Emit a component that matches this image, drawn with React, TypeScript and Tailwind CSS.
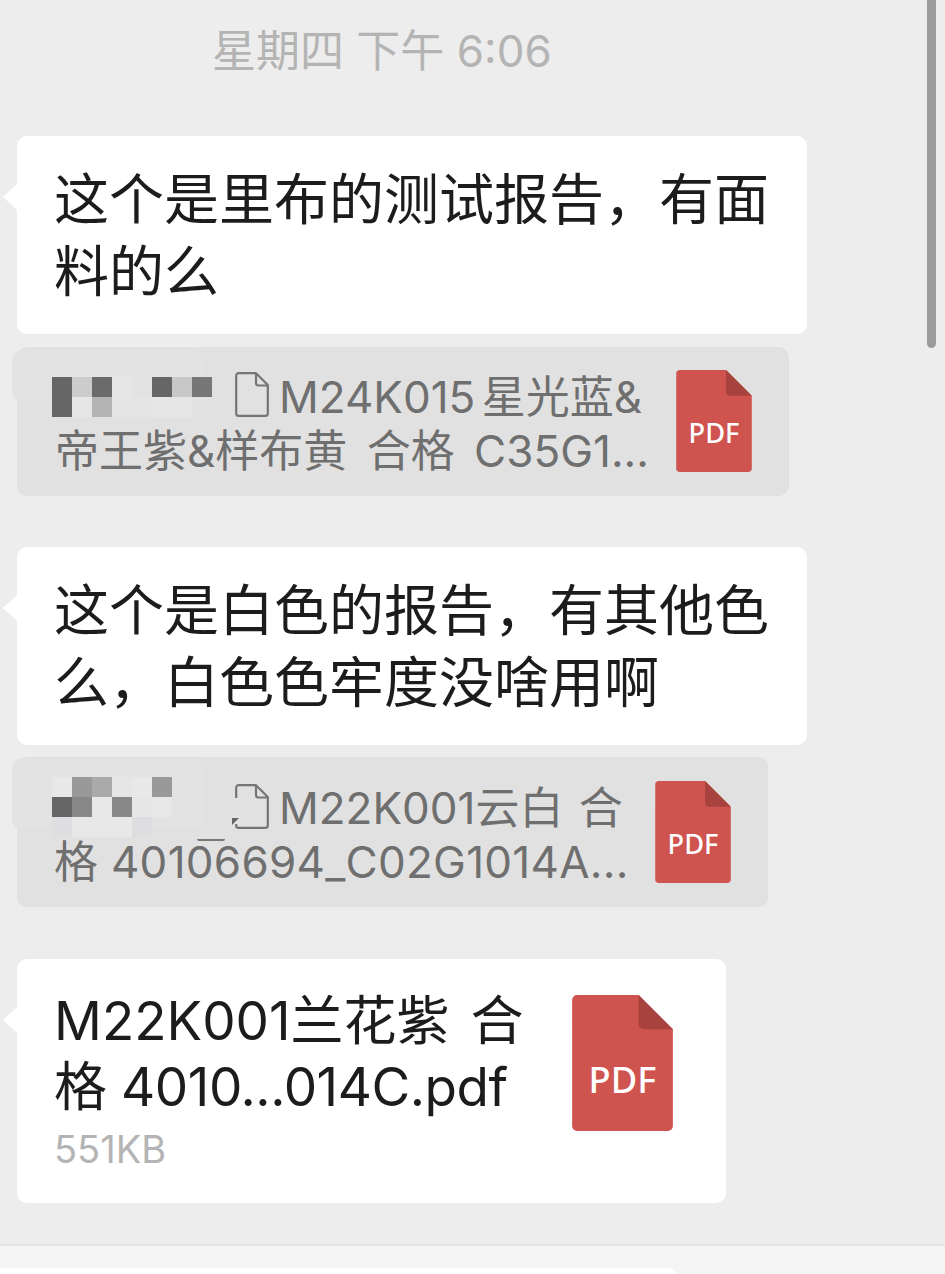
const fontStack = "font-['Inter','Noto_Sans_CJK_SC',sans-serif]";

const PdfIcon = ({ className }: { className: string }) => (
  <svg viewBox="0 0 100 135" className={className}>
    <path
      d="M5 0H66L100 34V130a5 5 0 0 1-5 5H5a5 5 0 0 1-5-5V5a5 5 0 0 1 5-5Z"
      fill="#cf534f"
    />
    <path d="M66 0L100 34H71a5 5 0 0 1-5-5Z" fill="#a8423e" />
    <text
      x="50"
      y="97"
      textAnchor="middle"
      fontSize="36"
      fontWeight="500"
      fill="#fff"
      fontFamily="'Noto Sans', sans-serif"
    >
      PDF
    </text>
  </svg>
);

const DocIcon = () => (
  <svg viewBox="0 0 34 45" className="w-[34px] h-[45px] shrink-0" fill="none" stroke="#757575" strokeWidth="2.2" strokeLinejoin="round">
    <path d="M3 1.2H21L32.8 13V41.5a2.3 2.3 0 0 1-2.3 2.3H3.5a2.3 2.3 0 0 1-2.3-2.3V3.5a2.3 2.3 0 0 1 1.8-2.3Z" />
    <path d="M21 1.2V11a2.5 2.5 0 0 0 2.5 2.5H32.8" />
  </svg>
);

const Bubble = ({ className, children }: { className: string; children: React.ReactNode }) => (
  <div className={`relative bg-white rounded-[10px] ${className}`}>
    <div className="absolute -left-[14px] top-[48px] w-0 h-0 border-y-[13px] border-y-transparent border-r-[14px] border-r-white" />
    {children}
  </div>
);

const mosaicOne = [
  "bg-[#666666]", "bg-[#cccccc]", "bg-[#6b6b6b]", "bg-[#e6e6e6]", "bg-transparent", "bg-[#666666]", "bg-[#c8c8c8]", "bg-[#777777]",
  "bg-[#666666]", "bg-[#e6e6e6]", "bg-[#b4b4b4]", "bg-[#e5e5e5]", "bg-[#e5e5e5]", "bg-[#e6e6e6]", "bg-[#e6e6e6]", "bg-transparent",
];

const mosaicTwo = [
  "bg-[#e8e8e8]", "bg-[#999999]", "bg-[#aaaaaa]", "bg-[#e6e6e6]", "bg-[#e8e8e8]", "bg-[#999999]", "bg-transparent", "bg-transparent",
  "bg-[#666666]", "bg-[#888888]", "bg-[#e8e8e8]", "bg-[#888888]", "bg-[#e6e6e6]", "bg-[#e8e8e8]", "bg-transparent", "bg-transparent",
  "bg-[#dfdfe1]", "bg-[#e8e8e8]", "bg-[#e8e8e8]", "bg-[#e8e8e8]", "bg-[#dedee0]", "bg-transparent", "bg-transparent", "bg-transparent",
];

const Mosaic = ({ cells, className = "" }: { cells: string[]; className?: string }) => (
  <div className={`grid grid-cols-[repeat(8,20px)] auto-rows-[20px] w-40 shrink-0 ${className}`}>
    {cells.map((c, i) => (
      <div key={i} className={c} />
    ))}
  </div>
);

export default function App() {
  return (
    <div className={`relative w-[945px] h-[1274px] overflow-hidden bg-[#ededed] flex flex-col ${fontStack}`}>
      <div className="absolute right-[9px] top-0 w-[9px] h-[348px] rounded-b-full bg-[#9b9b9b]" />

      <div className="flex-1 flex flex-col pl-[17px]">
        <div className="h-[136px] pt-[22px] pl-[195px] text-[44px] leading-[58px] text-[#b4b4b4]">星期四 下午 6:06</div>

        <Bubble className="w-[790px] h-[198px] pl-[37px] pt-[27px] text-[55px] leading-[72px] text-[#1c1c1c]">
          <div className="whitespace-nowrap">这个是里布的测试报告，有面</div>
          <div>料的么</div>
        </Bubble>

        <div className="relative mt-[13px] w-[772px] h-[149px] rounded-[10px] bg-[#e1e1e1] flex justify-between pl-[35px] pr-[37px] pt-[23px]">
          <div className="absolute -left-[5px] top-[4px] w-[190px] h-[50px] rounded-[8px] bg-[#e3e3e3]" />
          <div className="relative text-[#6f6f6f] text-[44px] leading-[54px] whitespace-nowrap">
            <div className="flex items-center h-[54px]">
              <Mosaic cells={mosaicOne} />
              <div className="ml-[23px] mr-[10px] -mt-[5px]"><DocIcon /></div>
              <span className="[word-spacing:-6px]">M24K015 星光蓝&amp;</span>
            </div>
            <div className="pl-[3px] [word-spacing:7px]">帝王紫&amp;样布黄 合格 C35G1...</div>
          </div>
          <PdfIcon className="w-[76px] h-[102px] shrink-0" />
        </div>

        <Bubble className="mt-[51px] w-[790px] h-[198px] pl-[37px] pt-[27px] text-[55px] leading-[72px] text-[#1c1c1c]">
          <div className="whitespace-nowrap">这个是白色的报告，有其他色</div>
          <div>么，白色色牢度没啥用啊</div>
        </Bubble>

        <div className="relative mt-[12px] w-[751px] h-[150px] rounded-[10px] bg-[#e1e1e1] flex justify-between pl-[35px] pr-[37px] pt-[24px]">
          <div className="absolute -left-[5px] top-[2px] w-[190px] h-[70px] rounded-[8px] bg-[#e3e3e3]" />
          <div className="relative text-[#6f6f6f] text-[44px] leading-[54px] whitespace-nowrap">
            <div className="flex items-center h-[54px]">
              <Mosaic cells={mosaicTwo} className="-mt-[2px]" />
              <div className="relative ml-[23px] mr-[10px] -mt-[3px]">
                <DocIcon />
                {/* the blur covers part of the icon here */}
                <div className="absolute -left-[3px] top-[14px] w-[8px] h-[26px] bg-[#e2e2e2]" />
                <div className="absolute -left-[3px] top-[34px] w-0 h-0 border-t-[7px] border-t-[#666666] border-r-[7px] border-r-transparent" />
                <div className="absolute -left-[38px] top-[55px] w-[28px] h-[2px] rounded-b-full bg-[#777777]" />
              </div>
              <span className="[word-spacing:3px]">M22K001云白 合</span>
            </div>
            <div className="pl-[2px] tracking-[0.27px]">格 40106694_C02G1014A...</div>
          </div>
          <PdfIcon className="w-[76px] h-[102px] shrink-0" />
        </div>

        <Bubble className="mt-[52px] w-[709px] h-[244px] flex justify-between pl-[37px] pr-[53px] pt-[29px]">
          <div className="text-[#1c1c1c] text-[53px] leading-[66px] whitespace-nowrap">
            <div className="[word-spacing:6px]">M22K001兰花紫 合</div>
            <div className="tracking-[-0.45px]">格 4010...014C.pdf</div>
            <div className="mt-[7px] text-[38px] leading-[44px] text-[#b4b4b4]">551KB</div>
          </div>
          <PdfIcon className="w-[101px] h-[136px] mt-[7px] shrink-0" />
        </Bubble>
      </div>

      <div className="h-[30px] border-t-2 border-[#e4e4e4] bg-[#f5f5f5]">
        <div className="mt-[22px] w-[676px] h-[8px] rounded-tr-[8px] bg-white" />
      </div>
    </div>
  );
}
